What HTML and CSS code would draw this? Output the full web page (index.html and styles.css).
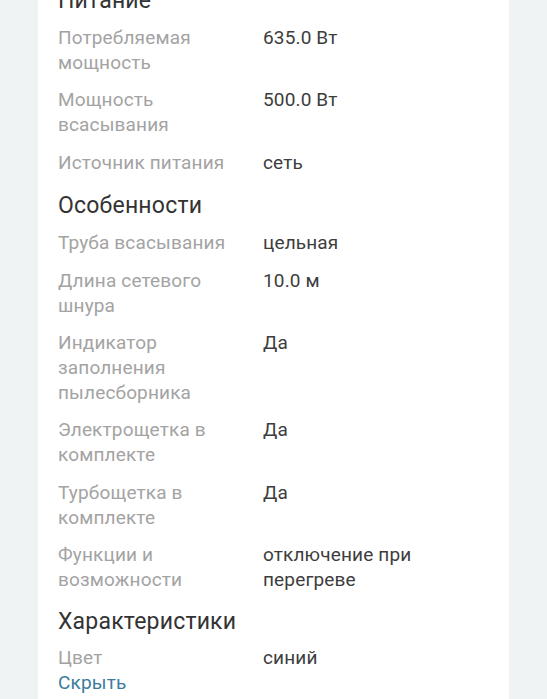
FILE: index.html
```html
<!DOCTYPE html>
<html lang="ru">
<head>
<meta charset="utf-8">
<link rel="stylesheet" href="styles.css">
</head>
<body>
<div class="page">
  <div class="card">
    <section class="group">
      <h2 class="group-title">Питание</h2>
      <div class="row"><div class="label">Потребляемая мощность</div><div class="value">635.0 Вт</div></div>
      <div class="row"><div class="label">Мощность всасывания</div><div class="value">500.0 Вт</div></div>
      <div class="row"><div class="label">Источник питания</div><div class="value">сеть</div></div>
    </section>
    <section class="group">
      <h2 class="group-title">Особенности</h2>
      <div class="row"><div class="label">Труба всасывания</div><div class="value">цельная</div></div>
      <div class="row"><div class="label">Длина сетевого шнура</div><div class="value">10.0 м</div></div>
      <div class="row"><div class="label">Индикатор заполнения пылесборника</div><div class="value">Да</div></div>
      <div class="row"><div class="label">Электрощетка в комплекте</div><div class="value">Да</div></div>
      <div class="row"><div class="label">Турбощетка в комплекте</div><div class="value">Да</div></div>
      <div class="row"><div class="label">Функции и возможности</div><div class="value">отключение при перегреве</div></div>
    </section>
    <section class="group group-last">
      <h2 class="group-title">Характеристики</h2>
      <div class="row row-last"><div class="label">Цвет</div><div class="value">синий</div></div>
    </section>
    <a class="toggle" href="#">Скрыть</a>
  </div>
</div>
</body>
</html>
```

FILE: styles.css
```css
html, body {
  margin: 0;
  padding: 0;
}
body {
  background: #eff3f4;
  font-family: Roboto, "Noto Sans", sans-serif;
  overflow: hidden;
}
.page {
  height: 699px;
  overflow: hidden;
}
.card {
  background: #ffffff;
  margin: -18px 38px 0 38px;
  padding: 0 20px 40px 20px;
}
.group-title {
  margin: 0;
  padding: 4px 0 9px 0;
  font-size: 23px;
  line-height: 30px;
  font-weight: 400;
  letter-spacing: 0.2px;
  color: #333333;
}
.group-last .group-title {
  padding: 2px 0 8px 0;
}
.row {
  display: grid;
  grid-template-columns: 190px 1fr;
  column-gap: 15px;
  font-size: 19px;
  line-height: 25px;
  letter-spacing: 0.15px;
  padding-bottom: 12.4px;
}
.row-last {
  padding-bottom: 0;
}
.label {
  color: #a3a3a3;
}
.value {
  color: #3d3d3d;
}
.toggle {
  display: block;
  font-size: 19px;
  line-height: 25px;
  letter-spacing: 0.15px;
  color: #3b7c9e;
  text-decoration: none;
}
```
